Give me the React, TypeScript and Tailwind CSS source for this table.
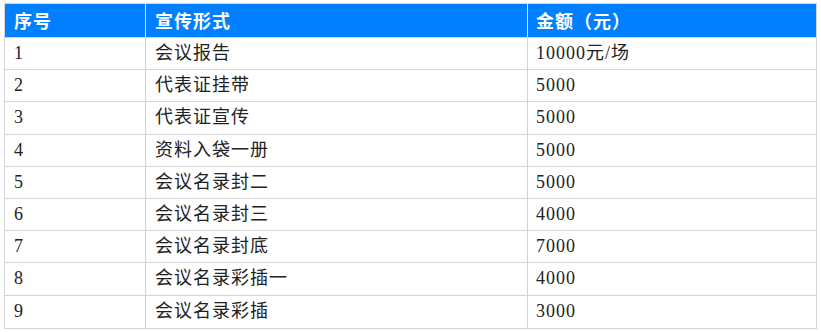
import React from "react";

const rows: [string, string, string][] = [
  ["1", "会议报告", "10000元/场"],
  ["2", "代表证挂带", "5000"],
  ["3", "代表证宣传", "5000"],
  ["4", "资料入袋一册", "5000"],
  ["5", "会议名录封二", "5000"],
  ["6", "会议名录封三", "4000"],
  ["7", "会议名录封底", "7000"],
  ["8", "会议名录彩插一", "4000"],
  ["9", "会议名录彩插", "3000"],
];

export default function App() {
  return (
    <div className="w-[821px] h-[332px] bg-white pt-[3px] pl-[4px]">
      <div
        className="w-[813px] border border-[#d4d4d4] text-[18px] tracking-[1px]"
        style={{ fontFamily: '"Liberation Serif", "Noto Sans CJK SC", serif' }}
      >
        <div
          className="flex h-[34px] bg-[#0080ff] border-b border-[#d4d4d4] font-bold text-white"
          style={{ fontFamily: '"Noto Sans CJK SC", sans-serif' }}
        >
          <div className="w-[141px] border-r border-[#e6e6e6] pl-[9px] flex items-center">序号</div>
          <div className="w-[382px] border-r border-[#e6e6e6] pl-[9px] flex items-center">宣传形式</div>
          <div className="flex-1 pl-[8px] flex items-center">金额（元）</div>
        </div>
        {rows.map((r, i) => (
          <div
            key={i}
            className={`flex h-[32.2px] text-[#222] ${i < rows.length - 1 ? "border-b border-[#d4d4d4]" : ""}`}
          >
            <div className="w-[141px] border-r border-[#d4d4d4] pl-[9px] flex items-center">{r[0]}</div>
            <div className="w-[382px] border-r border-[#d4d4d4] pl-[9px] flex items-center">{r[1]}</div>
            <div className="flex-1 pl-[8px] flex items-center">{r[2]}</div>
          </div>
        ))}
      </div>
    </div>
  );
}
